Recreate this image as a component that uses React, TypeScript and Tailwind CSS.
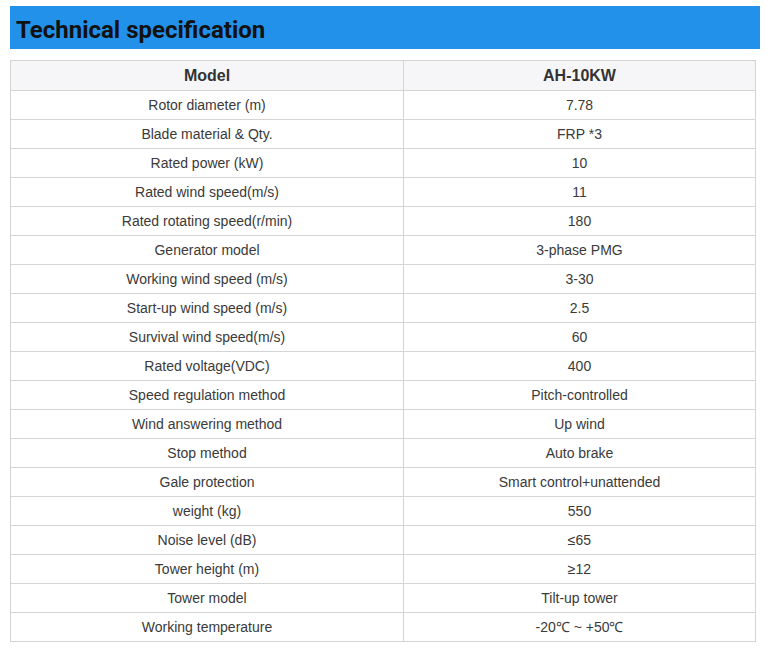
const rows: [string, string][] = [
  ['Rotor diameter (m)', '7.78'],
  ['Blade material & Qty.', 'FRP *3'],
  ['Rated power (kW)', '10'],
  ['Rated wind speed(m/s)', '11'],
  ['Rated rotating speed(r/min)', '180'],
  ['Generator model', '3-phase PMG'],
  ['Working wind speed (m/s)', '3-30'],
  ['Start-up wind speed (m/s)', '2.5'],
  ['Survival wind speed(m/s)', '60'],
  ['Rated voltage(VDC)', '400'],
  ['Speed regulation method', 'Pitch-controlled'],
  ['Wind answering method', 'Up wind'],
  ['Stop method', 'Auto brake'],
  ['Gale protection', 'Smart control+unattended'],
  ['weight (kg)', '550'],
  ['Noise level (dB)', '≤65'],
  ['Tower height (m)', '≥12'],
  ['Tower model', 'Tilt-up tower'],
  ['Working temperature', '-20℃ ~ +50℃'],
];

const App = () => {
  return (
    <div className="bg-white w-[767px] h-[648px] pt-[6px] pl-[10px] font-['Liberation_Sans',Arial,sans-serif] text-[#3a3a3a]">
      <div className="w-[750px] h-[43px] bg-[#2191ea] flex items-center pl-[6px] pt-[4px]">
        <h2 className="font-['Roboto',sans-serif] font-bold text-[24px] text-[#111] leading-none">
          Technical specification
        </h2>
      </div>
      <table className="mt-[11px] w-[745px] border-collapse table-fixed text-[14px]">
        <colgroup>
          <col className="w-[393px]" />
          <col className="w-[352px]" />
        </colgroup>
        <thead>
          <tr className="h-[30px] bg-[#f6f6f8]">
            <th className="border border-[#d4d4d4] text-[16px] font-bold text-center text-[#333]">Model</th>
            <th className="border border-[#d4d4d4] text-[16px] font-bold text-center text-[#333]">AH-10KW</th>
          </tr>
        </thead>
        <tbody>
          {rows.map(([k, v]) => (
            <tr key={k} className="h-[29px]">
              <td className="border border-[#d4d4d4] text-center">{k}</td>
              <td className="border border-[#d4d4d4] text-center">{v}</td>
            </tr>
          ))}
        </tbody>
      </table>
    </div>
  );
};

export default App;
